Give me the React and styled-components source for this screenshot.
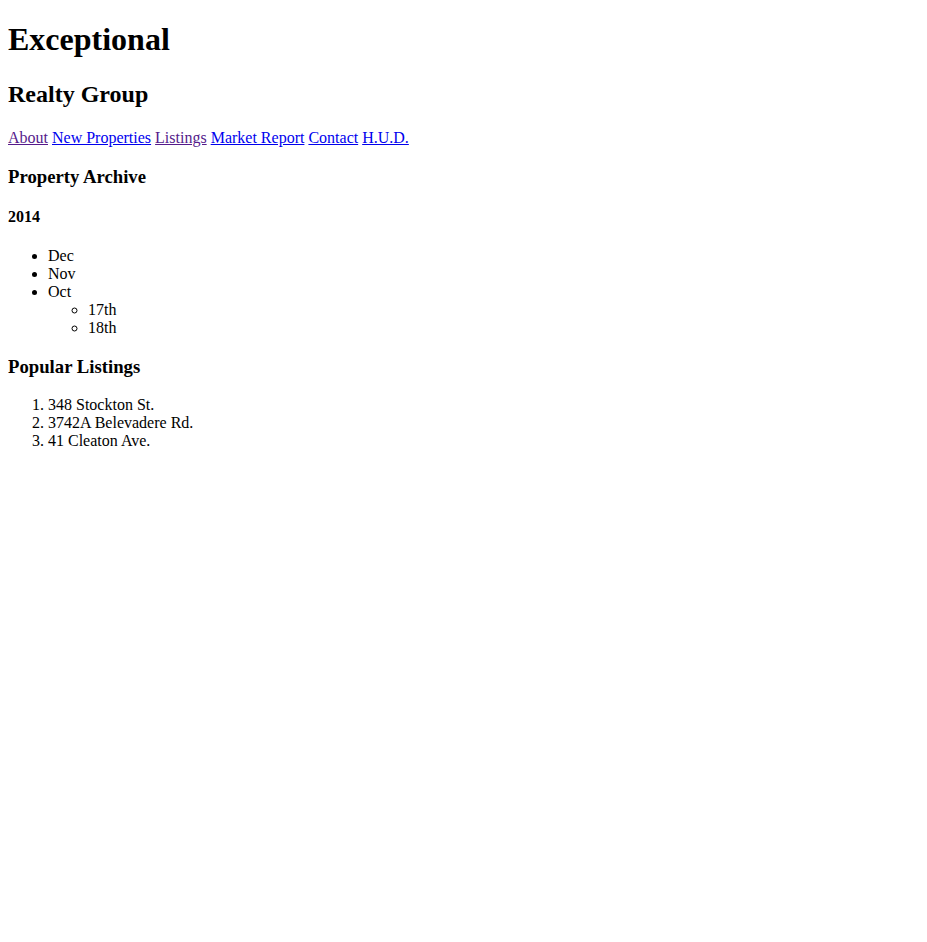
import React from "react";
import styled, { createGlobalStyle } from "styled-components";

const Global = createGlobalStyle`
  body {
    margin: 0 8px 8px;
    font-family: "Liberation Serif", "Times New Roman", serif;
    font-size: 16px;
    color: #000;
    background: #fff;
  }
`;

const Title = styled.h1`
  font-size: 32px;
  font-weight: bold;
  margin: 21.44px 0;
`;

const Subtitle = styled.h2`
  font-size: 24px;
  font-weight: bold;
  margin: 22.44px 0 19.92px;
`;

const Nav = styled.nav`
  display: block;
  padding-top: 1px;
`;

const NavLink = styled.a`
  color: ${(p) => (p.$visited ? "#551a8b" : "#0000ee")};
  text-decoration: underline;
  cursor: pointer;
`;

const SectionTitle = styled.h3`
  font-size: 18.72px;
  font-weight: bold;
  margin: 18.72px 0;
`;

const YearTitle = styled.h4`
  font-size: 16px;
  font-weight: bold;
  margin: 20.28px 0 21.28px;
`;

const BulletList = styled.ul`
  list-style-type: ${(p) => (p.$nested ? "circle" : "disc")};
  margin: ${(p) => (p.$nested ? "0" : "16px 0")};
  padding-left: 40px;
`;

const NumberList = styled.ol`
  list-style-type: decimal;
  margin: 16px 0;
  padding-left: 40px;
`;

const links = [
  ["About", true],
  ["New Properties", false],
  ["Listings", true],
  ["Market Report", false],
  ["Contact", false],
  ["H.U.D.", false],
];

export default function App() {
  return (
    <>
      <Global />
      <header>
        <Title>Exceptional</Title>
        <Subtitle>Realty Group</Subtitle>
        <Nav>
          {links.map(([label, visited], i) => (
            <React.Fragment key={label}>
              <NavLink href="#" $visited={visited}>
                {label}
              </NavLink>
              {i < links.length - 1 ? " " : ""}
            </React.Fragment>
          ))}
        </Nav>
      </header>
      <section>
        <SectionTitle>Property Archive</SectionTitle>
        <YearTitle>2014</YearTitle>
        <BulletList>
          <li>Dec</li>
          <li>Nov</li>
          <li>
            Oct
            <BulletList $nested>
              <li>17th</li>
              <li>18th</li>
            </BulletList>
          </li>
        </BulletList>
      </section>
      <section>
        <SectionTitle>Popular Listings</SectionTitle>
        <NumberList>
          <li>348 Stockton St.</li>
          <li>3742A Belevadere Rd.</li>
          <li>41 Cleaton Ave.</li>
        </NumberList>
      </section>
    </>
  );
}
